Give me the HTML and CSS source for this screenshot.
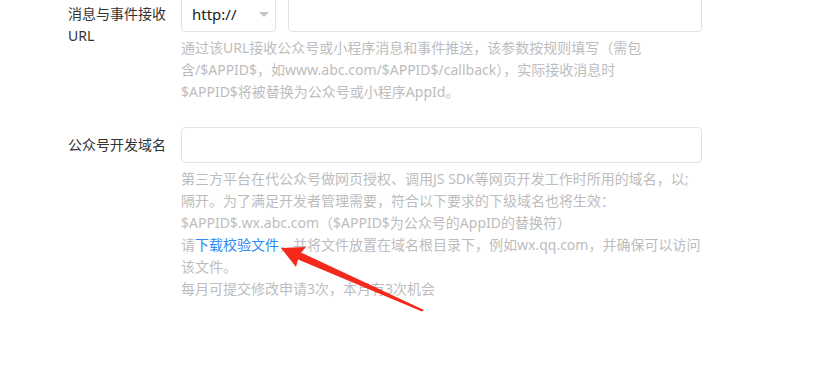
FILE: index.html
```html
<!DOCTYPE html>
<html lang="zh-CN">

<head>
    <meta charset="utf-8">
    <title>开发配置</title>
    <link rel="stylesheet" href="styles.css">
</head>

<body>
    <div class="dev-form">
        <!-- 消息与事件接收URL -->
        <div class="dev-form__item">
            <label class="dev-form__label">消息与事件接收URL</label>
            <div class="dev-form__content">
                <div class="url-group">
                    <div class="url-group__select">
                        <span>http://</span>
                        <i class="url-group__caret"></i>
                    </div>
                    <input class="dev-form__input url-group__input">
                </div>
                <p class="dev-form__help">
                    通过该URL接收公众号或小程序消息和事件推送，该参数按规则填写（需包<br>
                    含/$APPID$，如www.abc.com/$APPID$/callback），实际接收消息时<br>
                    $APPID$将被替换为公众号或小程序AppId。
                </p>
            </div>
        </div>
        <!-- 公众号开发域名 -->
        <div class="dev-form__item">
            <label class="dev-form__label">公众号开发域名</label>
            <div class="dev-form__content">
                <input class="dev-form__input">
                <p class="dev-form__help">
                    第三方平台在代公众号做网页授权、调用JS SDK等网页开发工作时所用的域名，以;<br>
                    隔开。为了满足开发者管理需要，符合以下要求的下级域名也将生效：<br>
                    $APPID$.wx.abc.com（$APPID$为公众号的AppID的替换符）<br>
                    请<a class="dev-form__link" href="#">下载校验文件</a>，并将文件放置在域名根目录下，例如wx.qq.com，并确保可以访问<br>
                    该文件。<br>
                    每月可提交修改申请3次，本月有3次机会
                </p>
            </div>
        </div>
    </div>

    <!-- screenshot annotation -->
    <svg class="annotation" width="826" height="368" viewBox="0 0 826 368">
        <polygon fill="#f5281c" points="281,248 306,247 301,252.5 424,310 422,311.5 298,259.5 296,267"/>
    </svg>
</body>

</html>
```

FILE: styles.css
```css
* {
    box-sizing: border-box;
}

body {
    position: relative;
    margin: 0;
    background-color: #ffffff;
    font: normal 14px "Noto Sans", "Noto Sans CJK SC", sans-serif;
    color: #333333;
}

.dev-form {
    margin-top: -4px;
    padding-left: 68px;
}

.dev-form__item {
    display: flex;
    margin-bottom: 24px;
}

.dev-form__label {
    flex: 0 0 113px;
    padding: 7px 15px 0 0;
    line-height: 22px;
}

.dev-form__content {
    width: 521px;
}

.dev-form__input {
    display: block;
    width: 100%;
    height: 36px;
    margin: 0;
    border: 1px solid #e2e2e2;
    border-radius: 4px;
    outline: none;
    background-color: #ffffff;
}

.url-group {
    display: flex;
    gap: 12px;
}

.url-group__select {
    display: flex;
    align-items: center;
    justify-content: space-between;
    flex: 0 0 95px;
    height: 36px;
    padding: 0 6px 0 10px;
    border: 1px solid #e2e2e2;
    border-radius: 4px;
    font-size: 15px;
    color: #222222;
}

.url-group__caret {
    width: 0;
    height: 0;
    border-left: 5px solid transparent;
    border-right: 5px solid transparent;
    border-top: 5px solid #c4c4c4;
}

.url-group__input {
    flex: 1;
}

.dev-form__help {
    margin: 5px 0 0;
    line-height: 22px;
    color: #bdbdbd;
    white-space: nowrap;
}

.dev-form__link {
    color: #2b8af4;
    text-decoration: none;
}

.annotation {
    position: absolute;
    top: 0;
    left: 0;
}
```
